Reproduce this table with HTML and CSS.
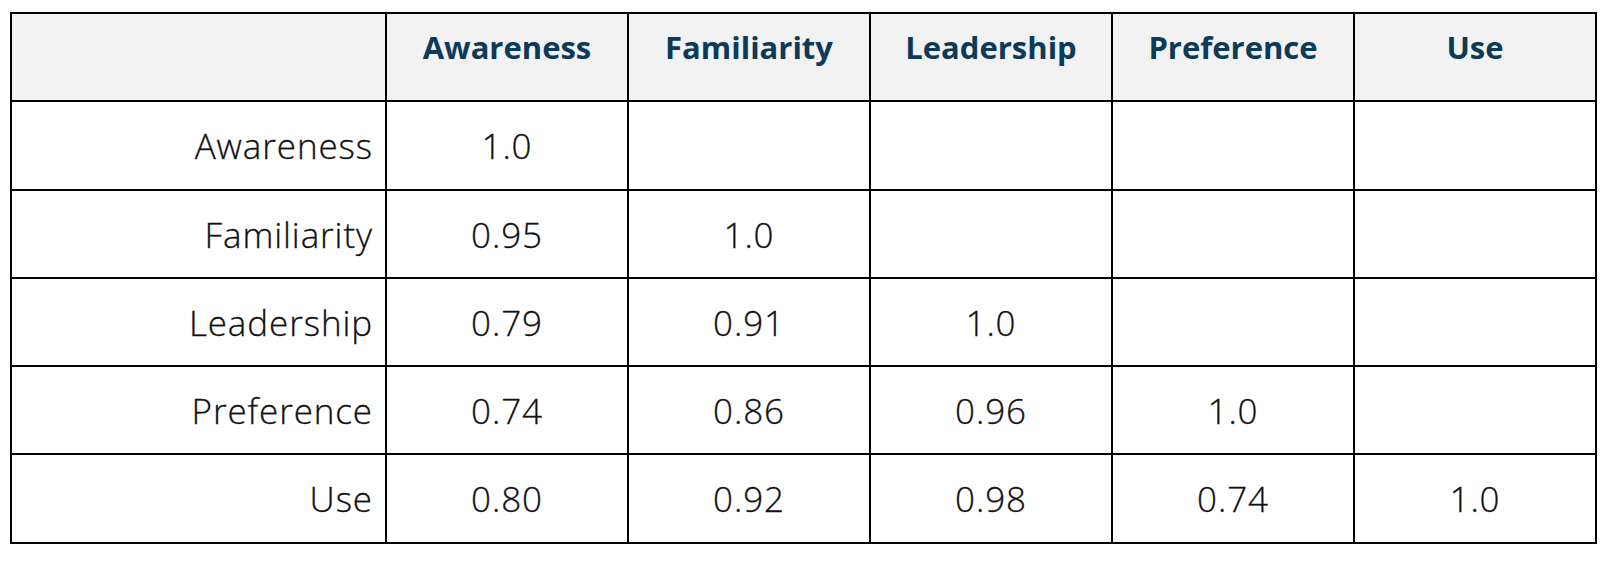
FILE: index.html
```html
<!DOCTYPE html>
<html>
<head>
<meta charset="utf-8">
<link rel="stylesheet" href="styles.css">
</head>
<body>
<table class="matrix">
  <colgroup>
    <col class="c-label">
    <col class="c-val"><col class="c-val"><col class="c-val"><col class="c-val"><col class="c-val">
  </colgroup>
  <thead>
    <tr>
      <th class="corner"></th>
      <th>Awareness</th>
      <th>Familiarity</th>
      <th>Leadership</th>
      <th>Preference</th>
      <th>Use</th>
    </tr>
  </thead>
  <tbody>
    <tr><td class="label">Awareness</td><td>1.0</td><td></td><td></td><td></td><td></td></tr>
    <tr><td class="label">Familiarity</td><td>0.95</td><td>1.0</td><td></td><td></td><td></td></tr>
    <tr><td class="label">Leadership</td><td>0.79</td><td>0.91</td><td>1.0</td><td></td><td></td></tr>
    <tr><td class="label">Preference</td><td>0.74</td><td>0.86</td><td>0.96</td><td>1.0</td><td></td></tr>
    <tr><td class="label">Use</td><td>0.80</td><td>0.92</td><td>0.98</td><td>0.74</td><td>1.0</td></tr>
  </tbody>
</table>
</body>
</html>
```
FILE: styles.css
```css
html, body {
  margin: 0;
  padding: 0;
  background: #ffffff;
}
body {
  padding: 12px 0 0 10px;
  font-family: "Open Sans", Lato, sans-serif;
}
.matrix {
  border-collapse: collapse;
  table-layout: fixed;
  width: 1584px;
}
.c-label { width: 375px; }
.c-val { width: 242px; }
.matrix tr { height: 88px; }
.matrix tbody tr:first-child { height: 89px; }
.matrix tbody tr:last-child { height: 89px; }
.matrix th, .matrix td {
  border: 2px solid #000;
  padding: 0;
}
.matrix thead tr { background: #f2f2f2; }
.matrix th {
  color: #0d3a58;
  font-weight: 700;
  font-size: 31px;
  text-align: center;
  vertical-align: middle;
  padding-bottom: 20px;
}
.matrix td {
  color: #111;
  font-weight: 300;
  -webkit-text-stroke: 0.3px #111;
  font-size: 35px;
  letter-spacing: 0.9px;
  text-align: center;
  vertical-align: middle;
}
.matrix td.label {
  text-align: right;
  padding-right: 12px;
}
```
